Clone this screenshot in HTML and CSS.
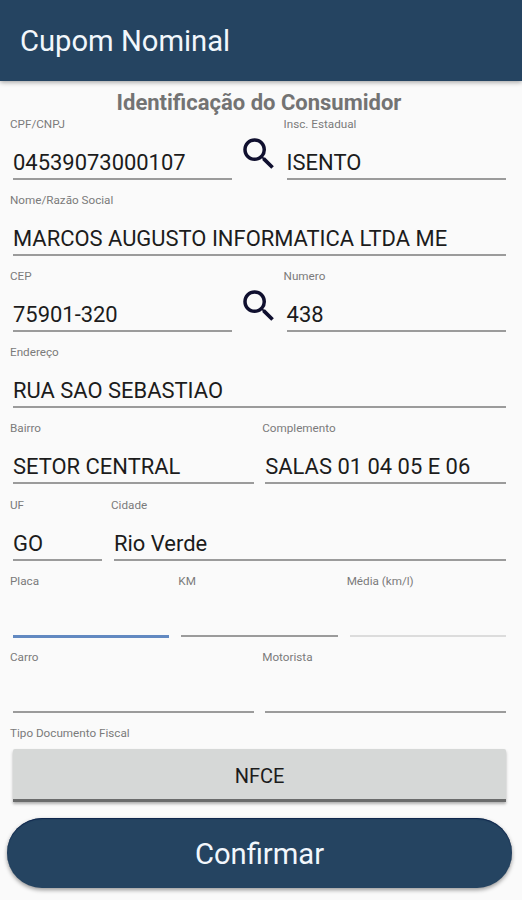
FILE: index.html
```html
<!DOCTYPE html>
<html lang="pt-BR">
<head>
<meta charset="utf-8">
<title>Cupom Nominal</title>
<link rel="stylesheet" href="styles.css">
</head>
<body>
<header class="toolbar"><h1 class="toolbar-title">Cupom Nominal</h1></header>
<main class="form">
  <h2 class="heading">Identificação do Consumidor</h2>
  <div class="row row-search">
    <div class="field"><span class="label">CPF/CNPJ</span><div class="value">04539073000107</div></div>
    <svg class="search" viewBox="0 0 24 24"><path d="M15.5 14h-.79l-.28-.27A6.47 6.47 0 0 0 16 9.5 6.5 6.5 0 1 0 9.5 16c1.61 0 3.09-.59 4.23-1.57l.27.28v.79l5 4.99L20.49 19l-4.99-5zm-6 0C7.01 14 5 11.99 5 9.5S7.01 5 9.5 5 14 7.01 14 9.5 11.99 14 9.5 14z"/></svg>
    <div class="field"><span class="label">Insc. Estadual</span><div class="value">ISENTO</div></div>
  </div>
  <div class="row">
    <div class="field"><span class="label">Nome/Razão Social</span><div class="value">MARCOS AUGUSTO INFORMATICA LTDA ME</div></div>
  </div>
  <div class="row row-search">
    <div class="field"><span class="label">CEP</span><div class="value">75901-320</div></div>
    <svg class="search" viewBox="0 0 24 24"><path d="M15.5 14h-.79l-.28-.27A6.47 6.47 0 0 0 16 9.5 6.5 6.5 0 1 0 9.5 16c1.61 0 3.09-.59 4.23-1.57l.27.28v.79l5 4.99L20.49 19l-4.99-5zm-6 0C7.01 14 5 11.99 5 9.5S7.01 5 9.5 5 14 7.01 14 9.5 11.99 14 9.5 14z"/></svg>
    <div class="field"><span class="label">Numero</span><div class="value">438</div></div>
  </div>
  <div class="row">
    <div class="field"><span class="label">Endereço</span><div class="value">RUA SAO SEBASTIAO</div></div>
  </div>
  <div class="row row-half">
    <div class="field"><span class="label">Bairro</span><div class="value">SETOR CENTRAL</div></div>
    <div class="field"><span class="label">Complemento</span><div class="value">SALAS 01 04 05 E 06</div></div>
  </div>
  <div class="row row-city">
    <div class="field"><span class="label">UF</span><div class="value">GO</div></div>
    <div class="field"><span class="label">Cidade</span><div class="value">Rio Verde</div></div>
  </div>
  <div class="row row-third">
    <div class="field"><span class="label">Placa</span><div class="value focused"></div></div>
    <div class="field"><span class="label">KM</span><div class="value"></div></div>
    <div class="field"><span class="label">Média (km/l)</span><div class="value disabled"></div></div>
  </div>
  <div class="row row-half">
    <div class="field"><span class="label">Carro</span><div class="value"></div></div>
    <div class="field"><span class="label">Motorista</span><div class="value"></div></div>
  </div>
  <div class="document">
    <span class="label">Tipo Documento Fiscal</span>
    <button class="toggle">NFCE</button>
  </div>
  <button class="confirm">Confirmar</button>
</main>
</body>
</html>
```
FILE: styles.css
```css
* { box-sizing: border-box; }
body {
  margin: 0;
  height: 900px;
  overflow: hidden;
  background: #fafafa;
  font-family: Roboto, sans-serif;
}
.toolbar {
  height: 81px;
  padding: 0 20px;
  display: flex;
  align-items: center;
  background: #254461;
  box-shadow: 0 1px 5px rgba(0, 0, 0, .4);
}
.toolbar-title {
  margin: 1px 0 0;
  font-size: 29.2px;
  font-weight: 400;
  line-height: 36px;
  color: #f2f7fc;
}
.form { display: flex; flex-direction: column; }
.heading {
  margin: 0;
  height: 36px;
  padding: 9px 4px 0 0;
  font-size: 22px;
  font-weight: 700;
  line-height: 26px;
  text-align: center;
  color: #737373;
}
.row {
  display: grid;
  grid-template-columns: minmax(0, 1fr);
  height: 76.12px;
  padding: 0 16px 0 13px;
}
.row-search { grid-template-columns: 219.4px 54.2px 219.4px; }
.row-half { grid-template-columns: 1fr 1fr; column-gap: 11.5px; }
.row-city { grid-template-columns: 89px 1fr; column-gap: 12px; }
.row-third { grid-template-columns: repeat(3, 1fr); column-gap: 12px; }
.label {
  display: block;
  height: 15px;
  margin-left: -3px;
  font-size: 11.7px;
  line-height: 15px;
  white-space: nowrap;
  color: #7b7b7b;
}
.value {
  height: 48px;
  padding-top: 16px;
  border-bottom: 2px solid #9b9b9b;
  font-size: 21.95px;
  line-height: 30px;
  white-space: nowrap;
  color: #1c1c1c;
}
.focused { height: 49px; border-bottom: 3px solid #6289c1; }
.disabled { border-bottom-color: #dcdcdc; }
.search {
  width: 42px;
  height: 42px;
  margin: 15.5px 0 0 5.5px;
  fill: #10102f;
}
.document { padding: 0 16px 0 13px; }
.toggle {
  display: block;
  width: 100%;
  height: 53px;
  margin: 8px 0 0;
  padding: 4px 0 0;
  border: 0;
  border-bottom: 3px solid #6b6c6c;
  border-radius: 2px 2px 0 0;
  background: #d6d8d7;
  box-shadow: 0 2px 3px rgba(0, 0, 0, .3);
  font: 400 20px/24px Roboto, sans-serif;
  color: #1c1c1c;
}
.confirm {
  height: 70px;
  margin: 16px 10px 0 7px;
  padding: 2px 0 0;
  border: 0;
  border-radius: 35px;
  background: #254461;
  box-shadow: 0 2px 4px rgba(0, 0, 0, .4), inset 0 1px 1px #0d244b;
  font: 400 29.2px/36px Roboto, sans-serif;
  color: #f2f7fc;
}
```
